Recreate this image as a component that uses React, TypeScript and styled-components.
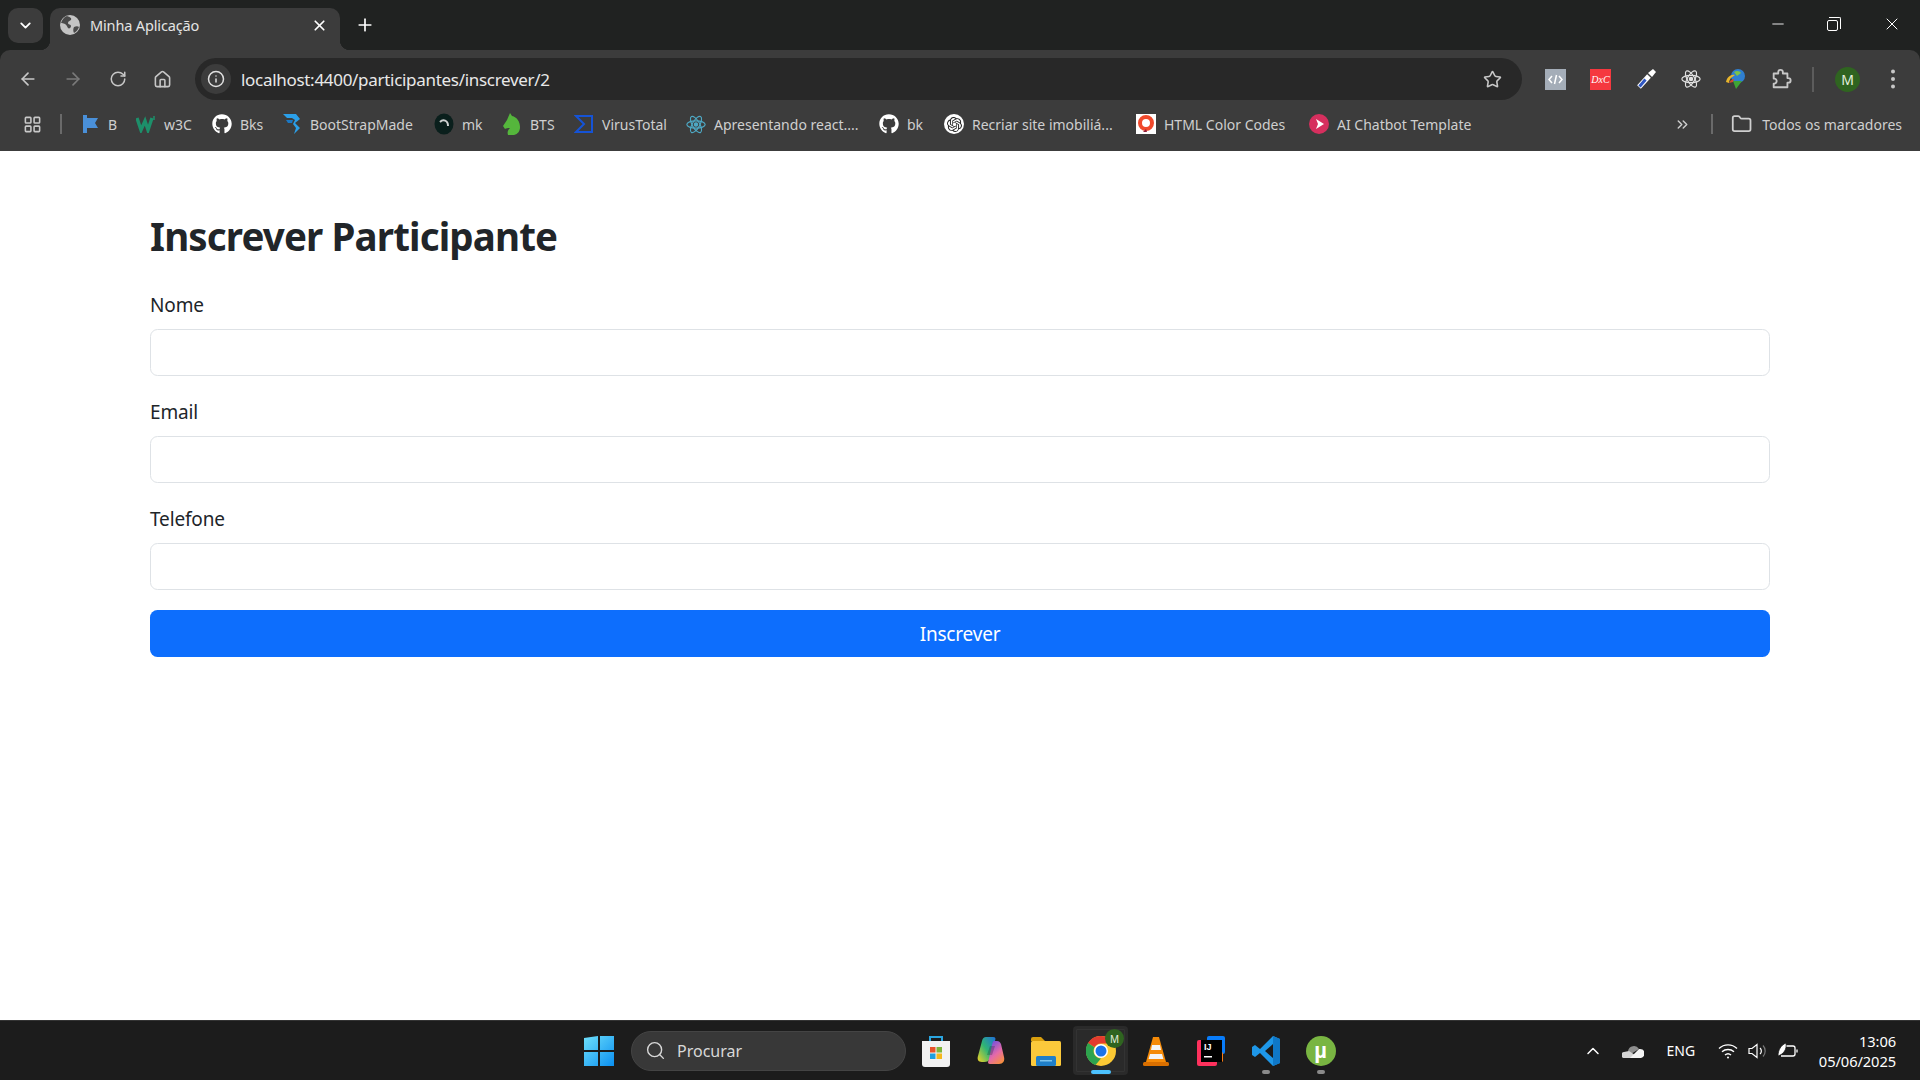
import React from "react";
import styled, { createGlobalStyle } from "styled-components";
import {
  ArrowLeft,
  ArrowRight,
  ChevronDown,
  ChevronUp,
  ChevronsRight,
  Folder,
  House,
  Info,
  LayoutGrid,
  Minus,
  Plus,
  RotateCw,
  Search,
  Star,
  X,
} from "lucide-react";
import { FaGithub } from "react-icons/fa";
import { SiOpenai } from "react-icons/si";

const GlobalStyle = createGlobalStyle`
  html, body {
    margin: 0;
    padding: 0;
    height: 100%;
    overflow: hidden;
    background: #fff;
  }
  * { box-sizing: border-box; }
`;

const uiFont = `"Noto Sans", "Open Sans", sans-serif`;

const Page = styled.div`
  width: 1920px;
  height: 1080px;
  display: flex;
  flex-direction: column;
  background: #202221;
  font-family: ${uiFont};
`;

/* tab strip */
const TabStrip = styled.div`
  height: 50px;
  flex-shrink: 0;
  display: flex;
  align-items: flex-start;
  padding-left: 8px;
  color: #fff;
`;

const TabSearch = styled.div`
  width: 35px;
  height: 35px;
  margin-top: 8px;
  border-radius: 10px;
  background: #3c3c3c;
  display: flex;
  align-items: center;
  justify-content: center;
`;

const Tab = styled.div`
  position: relative;
  width: 290px;
  height: 42px;
  margin: 8px 0 0 7px;
  padding: 0 12px 8px 10px;
  border-radius: 10px 10px 0 0;
  background: #3c3c3c;
  display: flex;
  align-items: center;
  gap: 10px;

  &::before,
  &::after {
    content: "";
    position: absolute;
    bottom: 0;
    width: 10px;
    height: 10px;
  }
  &::before {
    left: -10px;
    background: radial-gradient(circle at 0 0, transparent 10px, #3c3c3c 10.5px);
  }
  &::after {
    right: -10px;
    background: radial-gradient(circle at 100% 0, transparent 10px, #3c3c3c 10.5px);
  }
`;

const TabTitle = styled.span`
  flex: 1;
  font-size: 14.5px;
  letter-spacing: -0.15px;
  color: #e4e4e4;
`;

const NewTab = styled.div`
  width: 36px;
  height: 36px;
  margin: 7px 0 0 7px;
  display: flex;
  align-items: center;
  justify-content: center;
`;

const WindowControls = styled.div`
  margin-left: auto;
  display: flex;
`;

const WindowButton = styled.div`
  width: 57px;
  height: 48px;
  display: flex;
  align-items: center;
  justify-content: center;
`;

const RestoreGlyph = styled.div`
  position: relative;
  width: 11px;
  height: 11px;
  border: 1px solid #fff;
  border-radius: 2px;
  margin: 2px 5px 0 0;

  &::after {
    content: "";
    position: absolute;
    top: -4px;
    right: -4px;
    width: 11px;
    height: 11px;
    border-top: 1px solid #fff;
    border-right: 1px solid #fff;
    border-radius: 0 2px 0 0;
  }
`;

/* address toolbar */
const Toolbar = styled.div`
  height: 50px;
  flex-shrink: 0;
  display: flex;
  align-items: flex-start;
  padding: 8px 0 0 5px;
  background: #3c3c3c;
  border-radius: 10px 10px 0 0;
`;

const NavButton = styled.div<{ $dim?: boolean }>`
  width: 45px;
  height: 42px;
  flex-shrink: 0;
  display: flex;
  align-items: center;
  justify-content: center;
  color: ${(p) => (p.$dim ? "#7a7a7a" : "#c7c7c7")};
`;

const Address = styled.div`
  width: 1327px;
  height: 42px;
  margin: 0 11px 0 10px;
  padding: 0 7px 0 6px;
  border-radius: 21px;
  background: #282828;
  display: flex;
  align-items: center;
`;

const InfoChip = styled.div`
  width: 30px;
  height: 30px;
  border-radius: 50%;
  background: #3c3c3c;
  color: #e0e0e0;
  display: flex;
  align-items: center;
  justify-content: center;
`;

const UrlText = styled.span`
  flex: 1;
  margin-left: 10px;
  font-size: 17px;
  letter-spacing: -0.3px;
  color: #e8e8e8;
`;

const ToolbarDivider = styled.div`
  width: 2px;
  height: 25px;
  margin: 9px 11px 0 9px;
  background: #5c5c5c;
`;

const Avatar = styled.div<{ $size: number; $font: number }>`
  width: ${(p) => p.$size}px;
  height: ${(p) => p.$size}px;
  border-radius: 50%;
  background: #2f6420;
  color: #e4f0de;
  font-size: ${(p) => p.$font}px;
  display: flex;
  align-items: center;
  justify-content: center;
`;

/* bookmarks */
const BookmarkBar = styled.div`
  height: 51px;
  flex-shrink: 0;
  display: flex;
  align-items: center;
  padding: 0 18px 3px 12px;
  background: #3c3c3c;
  color: #c8c8c8;
`;

const AppsButton = styled.div`
  width: 40px;
  display: flex;
  justify-content: center;
`;

const BarDivider = styled.div<{ $before: number; $after: number }>`
  width: 2px;
  height: 20px;
  margin-left: ${(p) => p.$before}px;
  margin-right: ${(p) => p.$after}px;
  background: #6a6a6a;
`;

const Bookmark = styled.div<{ $width: number; $gap?: number }>`
  width: ${(p) => p.$width}px;
  flex-shrink: 0;
  display: flex;
  align-items: center;
  gap: ${(p) => p.$gap ?? 8}px;
`;

const BookmarkIcon = styled.div`
  width: 20px;
  height: 20px;
  flex-shrink: 0;
  display: flex;
  align-items: center;
  justify-content: center;
  color: #fff;
`;

const BookmarkText = styled.span`
  font-size: 14px;
  white-space: nowrap;
  color: #cfcfcf;
`;

const OverflowButton = styled.div`
  margin-left: auto;
  display: flex;
  color: #cfcfcf;
`;

/* page content */
const Main = styled.main`
  flex: 1;
  padding: 61px 150px 0;
  background: #fff;
  color: #212529;
`;

const Title = styled.h1`
  margin: 0 0 30px;
  font-size: 38.5px;
  line-height: 48px;
  font-weight: 700;
  letter-spacing: -0.85px;
`;

const Form = styled.form`
  display: flex;
  flex-direction: column;
`;

const Field = styled.div`
  & + & {
    margin-top: 21px;
  }
`;

const Label = styled.label`
  display: block;
  margin-bottom: 9px;
  font-size: 19px;
  line-height: 30px;
  letter-spacing: -0.15px;
`;

const Input = styled.input`
  display: block;
  width: 100%;
  height: 47px;
  padding: 0 15px;
  border: 1px solid #dee2e6;
  border-radius: 7.5px;
  background: #fff;
  font-family: inherit;
  font-size: 20px;
`;

const Submit = styled.button`
  width: 100%;
  height: 47px;
  margin-top: 20px;
  padding: 1px 0 0;
  border: 0;
  border-radius: 7.5px;
  background: #0d6efd;
  color: #fff;
  font-family: inherit;
  font-size: 19px;
  letter-spacing: -0.2px;
`;

/* windows taskbar */
const Taskbar = styled.footer`
  height: 60px;
  flex-shrink: 0;
  display: flex;
  align-items: center;
  padding-left: 574px;
  background: #1c1c1c;
  border-top: 1px solid #333;
  color: #fff;
`;

const StartSlot = styled.div`
  width: 50px;
  display: flex;
  justify-content: center;
`;

const SearchPill = styled.div`
  width: 275px;
  height: 40px;
  margin-left: 7px;
  padding-left: 13px;
  border-radius: 20px;
  background: #383838;
  border: 1px solid #444;
  display: flex;
  align-items: center;
  gap: 11px;
  color: #d8d8d8;
  font-size: 16px;
`;

const AppList = styled.div`
  margin-left: 2px;
  display: flex;
`;

const AppSlot = styled.div<{ $active?: boolean }>`
  position: relative;
  width: 55px;
  height: 49px;
  display: flex;
  align-items: center;
  justify-content: center;
  border-radius: 4px;
  background: ${(p) => (p.$active ? "#2a2a2a" : "transparent")};
  outline: ${(p) => (p.$active ? "1px solid #333" : "none")};
  outline-offset: -4px;
`;

const RunDot = styled.div<{ $active?: boolean }>`
  position: absolute;
  bottom: 1px;
  left: 50%;
  transform: translateX(-50%);
  width: ${(p) => (p.$active ? 20 : 8)}px;
  height: 4px;
  border-radius: 2px;
  background: ${(p) => (p.$active ? "#4cc2ff" : "#8a8a8a")};
`;

const Tray = styled.div`
  margin-left: auto;
  padding-right: 24px;
  display: flex;
  align-items: center;
`;

const TraySlot = styled.div<{ $width: number; $gap: number }>`
  width: ${(p) => p.$width}px;
  margin-right: ${(p) => p.$gap}px;
  display: flex;
  justify-content: center;
  font-size: 14px;
`;

const Clock = styled.div`
  margin-left: 20px;
  text-align: right;
  font-size: 14.7px;
  line-height: 20px;
  letter-spacing: -0.1px;
`;

/* drawn icons */
const GlobeIcon = () => (
  <svg width="20" height="20" viewBox="0 0 20 20">
    <circle cx="10" cy="10" r="10" fill="#c4c4c4" />
    <path d="M7 1c3 1 5 2 4 4-1 1-3 1-3 3s3 1 3 3-2 3-3 2-1-3-3-4-3-1-4-1C2 5 4 2 7 1zM14 12c2-1 4-1 5 0-1 3-3 5-5 6-1-2-1-4 0-6z" fill="#4a4a4a" />
  </svg>
);

const PuzzleIcon = () => (
  <svg width="22" height="22" viewBox="0 0 24 24" fill="none" stroke="#c7c7c7" strokeWidth="2" strokeLinejoin="round">
    <path d="M4 6h5V4.500a2.500 2.500 0 0 1 5 0V6h5v5h1a2.500 2.500 0 0 1 0 5h-1v5H4v-4h1a2.800 2.800 0 0 0 0-5.500H4z" />
  </svg>
);

const FlagIcon = () => (
  <svg width="18" height="20" viewBox="0 0 18 20">
    <path d="M2 1h4v3h11l-3 5 3 5H6v5H2z" fill="#4a90d9" />
  </svg>
);

const W3Icon = () => (
  <svg width="20" height="18" viewBox="0 0 20 18">
    <path d="M1 3l4 12 4-9 3 9 4-12" fill="none" stroke="#1d8f6a" strokeWidth="3.4" />
    <path d="M18 1v4" stroke="#1d8f6a" strokeWidth="1.5" />
  </svg>
);

const BootstrapMadeIcon = () => (
  <svg width="20" height="22" viewBox="0 0 20 22">
    <path d="M1 1h13l4 5-5 4 5 5-6 6 2-6-3-4 2-4-3-2H5z" fill="#2b9fe8" />
    <path d="M4 7h7l-1 3H6z" fill="#1b78c4" />
  </svg>
);

const RingIcon = () => (
  <svg width="20" height="22" viewBox="0 0 20 22">
    <ellipse cx="10" cy="11" rx="9.5" ry="10.5" fill="#0a1f1c" />
    <path d="M6 9c3-3 8-2 8 4" fill="none" stroke="#cfd2d2" strokeWidth="2" />
  </svg>
);

const HorseIcon = () => (
  <svg width="20" height="24" viewBox="0 0 20 24">
    <path d="M8 1l2 3c5 1 8 6 8 11 0 4-2 7-6 8H6c-1-3 0-5 2-7-2 0-4 0-5 1l-2-3 4-6z" fill="#55b63c" />
  </svg>
);

const SigmaIcon = () => (
  <svg width="20" height="20" viewBox="0 0 20 20">
    <path d="M2 2h16v16H2l8-8z" fill="none" stroke="#1553d6" strokeWidth="2" />
  </svg>
);

const ReactIcon = ({ color, size }: { color: string; size: number }) => (
  <svg width={size} height={size} viewBox="0 0 24 24" fill="none" stroke={color} strokeWidth="1.4">
    <ellipse cx="12" cy="12" rx="11" ry="4.4" />
    <ellipse cx="12" cy="12" rx="11" ry="4.4" transform="rotate(60 12 12)" />
    <ellipse cx="12" cy="12" rx="11" ry="4.4" transform="rotate(120 12 12)" />
    <circle cx="12" cy="12" r="2" fill={color} />
  </svg>
);

const OpenAiBadge = styled.div`
  width: 20px;
  height: 20px;
  border-radius: 50%;
  background: #fff;
  color: #222;
  display: flex;
  align-items: center;
  justify-content: center;
`;

const ColorCodesIcon = () => (
  <svg width="20" height="20" viewBox="0 0 20 20">
    <rect width="20" height="20" fill="#fff" />
    <circle cx="10" cy="9" r="6" fill="none" stroke="#f0492c" strokeWidth="4" />
    <path d="M10 15l-3 3h4z" fill="#8f1d3a" />
  </svg>
);

const ChatbotIcon = () => (
  <svg width="20" height="20" viewBox="0 0 20 20">
    <circle cx="10" cy="10" r="10" fill="#d62f5e" />
    <path d="M7 5l8 5-8 5 2-5z" fill="#fff" />
  </svg>
);

const CodeExtension = () => (
  <svg width="21" height="21" viewBox="0 0 21 21">
    <rect width="21" height="21" fill="#a4adb8" />
    <path d="M7 7l-3 3.5L7 14M14 7l3 3.5L14 14M11.500 6l-2 9" fill="none" stroke="#fff" strokeWidth="1.5" />
  </svg>
);

const DcBadge = styled.div`
  width: 21px;
  height: 21px;
  background: #f5383f;
  color: #fff;
  font-family: "Liberation Serif", serif;
  font-style: italic;
  font-size: 10px;
  line-height: 21px;
  text-align: center;
`;

const DropperExtension = () => (
  <svg width="24" height="24" viewBox="0 0 24 24">
    <path d="M5 20l10-11" stroke="#fff" strokeWidth="5" />
    <path d="M5.500 19.500l6-7" stroke="#2f56c2" strokeWidth="3" />
    <path d="M14 6l4 4 4-5-3-3z" fill="#fff" />
  </svg>
);

const IdmExtension = () => (
  <svg width="24" height="24" viewBox="0 0 24 24">
    <circle cx="14" cy="9" r="7" fill="#2f7fd1" />
    <path d="M10 5c3-2 6-1 7 1l-4 3z" fill="#7cc349" />
    <path d="M2 15c1-5 5-8 9-7l-4 3c-1 1-2 3-2 5z" fill="#e8b62c" />
    <path d="M5 16c1-2 3-4 5-4l-1 3z" fill="#d64a2a" />
    <path d="M9 14h9l-6 8z" fill="#3fa535" />
  </svg>
);

const WindowsLogo = () => (
  <svg width="30" height="30" viewBox="0 0 30 30">
    <defs>
      <linearGradient id="win" x1="0" y1="0" x2="1" y2="1">
        <stop offset="0" stopColor="#6fe0fb" />
        <stop offset="1" stopColor="#0a8ff0" />
      </linearGradient>
    </defs>
    <path d="M0 2l14-2v14H0zM16 0h14v14H16zM0 16h14v14H0zM16 16h14v14H16z" fill="url(#win)" />
  </svg>
);

const StoreIcon = () => (
  <svg width="30" height="32" viewBox="0 0 30 32">
    <path d="M9 7V2h12v5" fill="none" stroke="#2aa5e0" strokeWidth="2" />
    <path d="M1 6h28v23a3 3 0 0 1-3 3H4a3 3 0 0 1-3-3z" fill="#f2f2f2" />
    <rect x="9" y="12" width="5.5" height="5.5" fill="#e8532b" />
    <rect x="15.5" y="12" width="5.5" height="5.5" fill="#7db53a" />
    <rect x="9" y="18.5" width="5.5" height="5.5" fill="#1e9fe0" />
    <rect x="15.5" y="18.5" width="5.5" height="5.5" fill="#f4b81c" />
  </svg>
);

const CopilotIcon = () => (
  <svg width="28" height="30" viewBox="0 0 28 30">
    <defs>
      <linearGradient id="copA" x1="0" y1="1" x2="1" y2="0">
        <stop offset="0" stopColor="#f3d323" />
        <stop offset="0.5" stopColor="#2fb574" />
        <stop offset="1" stopColor="#1f6fdc" />
      </linearGradient>
      <linearGradient id="copB" x1="0.2" y1="0" x2="0.8" y2="1">
        <stop offset="0" stopColor="#6a4fe0" />
        <stop offset="0.55" stopColor="#e56aa8" />
        <stop offset="1" stopColor="#f7913a" />
      </linearGradient>
    </defs>
    <path d="M9 1h7c2.500 0 3 1.500 2 4l-5 17c-1 3-3 4-6 4H5c-4 0-5-3-4-6L5 5c.6-2.500 2-4 4-4z" fill="url(#copA)" />
    <path d="M17 5h3c2 0 3 1 4 3l3 13c1 4-1 7-5 7h-9c-2 0-2.500-1.500-1.500-3.500L15 9c.5-2 1-4 2-4z" fill="url(#copB)" />
    <path d="M13 10h5l-3 9h-5z" fill="#1c1c1c" opacity="0.25" />
  </svg>
);

const FolderIcon = () => (
  <svg width="32" height="30" viewBox="0 0 32 30">
    <path d="M1 3a2 2 0 0 1 2-2h8l4 4H1z" fill="#d99f0e" />
    <rect x="1" y="5" width="30" height="25" rx="1.5" fill="#fbc93b" />
    <rect x="6" y="20" width="20" height="10" rx="1.5" fill="#1f7fc9" />
    <rect x="10" y="24" width="12" height="1.5" fill="#7cc4ee" />
  </svg>
);

const ChromeIcon = () => (
  <svg width="30" height="30" viewBox="0 0 30 30">
    <circle cx="15" cy="15" r="15" fill="#fcc934" />
    <path d="M15 0a15 15 0 0 1 13 7.500H15A7.500 7.500 0 0 0 8.500 11.300L2 7A15 15 0 0 1 15 0z" fill="#e33b2e" />
    <path d="M2 7l6.500 4.300A7.500 7.500 0 0 0 15 22.500L9.500 29A15 15 0 0 1 2 7z" fill="#2da44e" />
    <circle cx="15" cy="15" r="7" fill="#fff" />
    <circle cx="15" cy="15" r="5.5" fill="#1a73e8" />
  </svg>
);

const ChromeBadge = styled(Avatar)`
  position: absolute;
  top: 3px;
  right: 4px;
`;

const VlcIcon = () => (
  <svg width="26" height="30" viewBox="0 0 26 30">
    <path d="M10 1h6l7 25H3z" fill="#f58a07" />
    <path d="M9 9h8l1 5H8zM7 18h12l1.400 5H5.600z" fill="#f4f4f4" />
    <rect x="0" y="26" width="26" height="4" rx="1.500" fill="#d96f00" />
  </svg>
);

const IdeaIcon = () => (
  <svg width="28" height="30" viewBox="0 0 28 30">
    <rect x="10" y="0" width="18" height="18" rx="2" fill="#087cfa" />
    <rect x="0" y="4" width="20" height="26" rx="2" fill="#fe315d" />
    <rect x="14" y="16" width="12" height="10" rx="1.500" fill="#f97a12" />
    <rect x="4" y="4" width="21" height="22" fill="#000" />
    <text x="7" y="14" fontSize="9" fontWeight="700" fontFamily="Liberation Sans, sans-serif" fill="#fff">IJ</text>
    <rect x="7" y="20" width="8" height="1.500" fill="#fff" />
  </svg>
);

const VsCodeIcon = () => (
  <svg width="30" height="30" viewBox="0 0 30 30">
    <path d="M22 0l7 3v24l-7 3L9 17l-5 4-3-2V11l3-2 5 4zM22 8l-8 7 8 7z" fill="#1e97e8" />
    <path d="M22 0l7 3v24l-7 3z" fill="#0f78c8" />
  </svg>
);

const TorrentBadge = styled.div`
  width: 30px;
  height: 30px;
  border-radius: 50%;
  background: #79b542;
  color: #fff;
  font-family: "Liberation Sans", sans-serif;
  font-size: 22px;
  font-weight: 700;
  line-height: 30px;
  text-align: center;
`;

const OneDriveIcon = () => (
  <svg width="22" height="14" viewBox="0 0 22 14">
    <path d="M6 7a6 6 0 0 1 11-2l-8 5z" fill="#8e8e8e" />
    <path d="M3 14a3 3 0 0 1-1-6l5-1 6 4-3 3z" fill="#d4d4d4" />
    <path d="M8 14l9-9a4.500 4.500 0 0 1 2 9z" fill="#f4f4f4" />
  </svg>
);

const WifiIcon = () => (
  <svg width="20" height="16" viewBox="0 0 20 16" fill="none" stroke="#fff" strokeWidth="1.4">
    <path d="M1 5.500a13 13 0 0 1 18 0M4 8.800a9 9 0 0 1 12 0M7 12a4.500 4.500 0 0 1 6 0" />
    <circle cx="10" cy="14.500" r="1" fill="#fff" stroke="none" />
  </svg>
);

const SpeakerIcon = () => (
  <svg width="20" height="18" viewBox="0 0 20 18" fill="none" stroke="#fff" strokeWidth="1.2">
    <path d="M1 6.500h3L9 2.500v13l-5-4H1z" />
    <path d="M12 6a4 4 0 0 1 0 6" />
    <path d="M15 3.500a8 8 0 0 1 0 11" stroke="#777" />
  </svg>
);

const BatteryIcon = () => (
  <svg width="22" height="18" viewBox="0 0 22 18" fill="none" stroke="#fff" strokeWidth="1.3">
    <path d="M8 4h8a2 2 0 0 1 2 2v6a2 2 0 0 1-2 2H4" />
    <path d="M20 7.500v3" />
    <path d="M1 14c0-6 3-11 8-13 1 6-2 11-8 13z" fill="#fff" stroke="#1c1c1c" strokeWidth="0.8" />
  </svg>
);

const bookmarks: { label: string; width: number; icon: React.ReactNode }[] = [
  { label: "B", width: 56, icon: <FlagIcon /> },
  { label: "w3C", width: 76, icon: <W3Icon /> },
  { label: "Bks", width: 70, icon: <FaGithub size={20} /> },
  { label: "BootStrapMade", width: 152, icon: <BootstrapMadeIcon /> },
  { label: "mk", width: 68, icon: <RingIcon /> },
  { label: "BTS", width: 72, icon: <HorseIcon /> },
  { label: "VirusTotal", width: 112, icon: <SigmaIcon /> },
  { label: "Apresentando react....", width: 193, icon: <ReactIcon color="#4ea8c4" size={21} /> },
  { label: "bk", width: 65, icon: <FaGithub size={20} /> },
  {
    label: "Recriar site imobiliá...",
    width: 192,
    icon: (
      <OpenAiBadge>
        <SiOpenai size={15} />
      </OpenAiBadge>
    ),
  },
  { label: "HTML Color Codes", width: 173, icon: <ColorCodesIcon /> },
  { label: "AI Chatbot Template", width: 170, icon: <ChatbotIcon /> },
];

const fields = ["Nome", "Email", "Telefone"];

export default function App() {
  return (
    <Page>
      <GlobalStyle />
      <TabStrip>
        <TabSearch>
          <ChevronDown size={17} strokeWidth={2.6} />
        </TabSearch>
        <Tab>
          <GlobeIcon />
          <TabTitle>Minha Aplicação</TabTitle>
          <X size={17} strokeWidth={2.4} />
        </Tab>
        <NewTab>
          <Plus size={20} strokeWidth={2} />
        </NewTab>
        <WindowControls>
          <WindowButton>
            <Minus size={18} strokeWidth={1.2} />
          </WindowButton>
          <WindowButton>
            <RestoreGlyph />
          </WindowButton>
          <WindowButton>
            <X size={20} strokeWidth={1.2} />
          </WindowButton>
        </WindowControls>
      </TabStrip>

      <Toolbar>
        <NavButton>
          <ArrowLeft size={20} />
        </NavButton>
        <NavButton $dim>
          <ArrowRight size={20} />
        </NavButton>
        <NavButton>
          <RotateCw size={18} />
        </NavButton>
        <NavButton>
          <House size={19} />
        </NavButton>
        <Address>
          <InfoChip>
            <Info size={18} />
          </InfoChip>
          <UrlText>localhost:4400/participantes/inscrever/2</UrlText>
          <NavButton>
            <Star size={19} />
          </NavButton>
        </Address>
        <NavButton>
          <CodeExtension />
        </NavButton>
        <NavButton>
          <DcBadge>DxC</DcBadge>
        </NavButton>
        <NavButton>
          <DropperExtension />
        </NavButton>
        <NavButton>
          <ReactIcon color="#e0e0e0" size={20} />
        </NavButton>
        <NavButton>
          <IdmExtension />
        </NavButton>
        <NavButton>
          <PuzzleIcon />
        </NavButton>
        <ToolbarDivider />
        <NavButton>
          <Avatar $size={25} $font={14}>M</Avatar>
        </NavButton>
        <NavButton>
          <svg width="6" height="22" viewBox="0 0 6 22" fill="#c7c7c7">
            <circle cx="3" cy="3.500" r="2" />
            <circle cx="3" cy="11" r="2" />
            <circle cx="3" cy="18.500" r="2" />
          </svg>
        </NavButton>
      </Toolbar>

      <BookmarkBar>
        <AppsButton>
          <LayoutGrid size={19} />
        </AppsButton>
        <BarDivider $before={8} $after={18} />
        {bookmarks.map((b) => (
          <Bookmark key={b.label} $width={b.width}>
            <BookmarkIcon>{b.icon}</BookmarkIcon>
            <BookmarkText>{b.label}</BookmarkText>
          </Bookmark>
        ))}
        <OverflowButton>
          <ChevronsRight size={17} />
        </OverflowButton>
        <BarDivider $before={20} $after={18} />
        <Bookmark $width={171} $gap={10}>
          <Folder size={22} color="#cfcfcf" />
          <BookmarkText>Todos os marcadores</BookmarkText>
        </Bookmark>
      </BookmarkBar>

      <Main>
        <Title>Inscrever Participante</Title>
        <Form>
          {fields.map((name) => (
            <Field key={name}>
              <Label>{name}</Label>
              <Input type="text" />
            </Field>
          ))}
          <Submit type="button">Inscrever</Submit>
        </Form>
      </Main>

      <Taskbar>
        <StartSlot>
          <WindowsLogo />
        </StartSlot>
        <SearchPill>
          <Search size={21} strokeWidth={1.6} />
          Procurar
        </SearchPill>
        <AppList>
          <AppSlot>
            <StoreIcon />
          </AppSlot>
          <AppSlot>
            <CopilotIcon />
          </AppSlot>
          <AppSlot>
            <FolderIcon />
          </AppSlot>
          <AppSlot $active>
            <ChromeIcon />
            <ChromeBadge $size={19} $font={10}>M</ChromeBadge>
            <RunDot $active />
          </AppSlot>
          <AppSlot>
            <VlcIcon />
          </AppSlot>
          <AppSlot>
            <IdeaIcon />
          </AppSlot>
          <AppSlot>
            <VsCodeIcon />
            <RunDot />
          </AppSlot>
          <AppSlot>
            <TorrentBadge>µ</TorrentBadge>
            <RunDot />
          </AppSlot>
        </AppList>
        <Tray>
          <TraySlot $width={20} $gap={18}>
            <ChevronUp size={20} strokeWidth={1.8} />
          </TraySlot>
          <TraySlot $width={24} $gap={22}>
            <OneDriveIcon />
          </TraySlot>
          <TraySlot $width={28} $gap={22}>ENG</TraySlot>
          <TraySlot $width={22} $gap={9}>
            <WifiIcon />
          </TraySlot>
          <TraySlot $width={20} $gap={9}>
            <SpeakerIcon />
          </TraySlot>
          <TraySlot $width={22} $gap={0}>
            <BatteryIcon />
          </TraySlot>
          <Clock>
            13:06
            <br />
            05/06/2025
          </Clock>
        </Tray>
      </Taskbar>
    </Page>
  );
}
